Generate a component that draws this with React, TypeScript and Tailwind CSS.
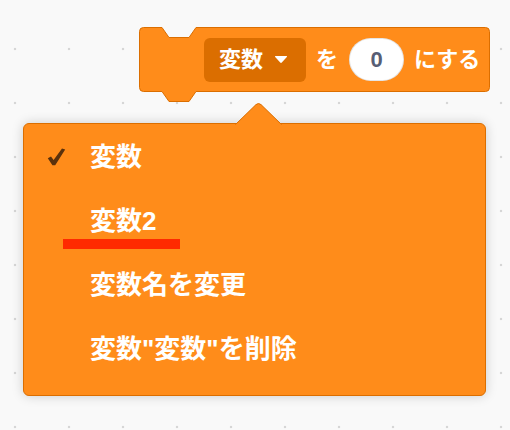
const items = ["変数", "変数2", "変数名を変更", "変数\"変数\"を削除"];

const BlockShape = () => (
    <svg className="absolute left-0 top-0 overflow-visible" width="352" height="76">
        <path
            d="M0.5,4.5 Q0.5,0.5 4.5,0.5 L23,0.5 L30,10.5 L50,10.5 L57,0.5 L346.5,0.5 Q350.5,0.5 350.5,4.5 L350.5,60.5 Q350.5,64.5 346.5,64.5 L57,64.5 L50,74.5 L30,74.5 L23,64.5 L4.5,64.5 Q0.5,64.5 0.5,60.5 Z"
            fill="#ff8c1a"
            stroke="#db6e00"
        />
    </svg>
);

const CheckMark = () => (
    <svg width="19" height="18" viewBox="0 0 19 18">
        <path d="M0.8,10.2 L4,8.4 L6.6,12 L15,0.6 L18.2,1.6 L8.2,17.2 L5.4,17.2 Z" fill="#5a310c" />
    </svg>
);

export default function App() {
    return (
        <div className="w-[510px] h-[430px] overflow-hidden bg-[#f9f9f9] bg-[radial-gradient(circle,#d6d6d6_1.4px,transparent_1.6px)] bg-[size:54px_54px] bg-[position:-12px_22px] font-['Liberation_Sans','Noto_Sans_CJK_JP',sans-serif] pt-[27px]">
            <div className="relative ml-[139px] w-[351px] h-[65px]">
                <BlockShape />
                <div className="relative flex items-center h-full pl-[65px] text-white font-bold text-[22px]">
                    <div className="flex items-center h-[44px] w-[102px] pl-[15px] rounded-md bg-[#db6e00]">
                        <span>変数</span>
                        <svg className="ml-[11px]" width="14" height="9" viewBox="0 0 14 9">
                            <path d="M1.5,1 L12.5,1 Q13.5,1 12.8,2 L7.8,7.6 Q7,8.4 6.2,7.6 L1.2,2 Q0.5,1 1.5,1 Z" fill="#fff" />
                        </svg>
                    </div>
                    <span className="ml-[10px]">を</span>
                    <div className="ml-[11px] flex items-center justify-center w-[55px] h-[43px] rounded-full bg-white border border-black/10 text-[#575e75] text-[22px]">
                        0
                    </div>
                    <span className="ml-[10px]">にする</span>
                </div>
            </div>

            <div className="relative mt-[31px] ml-[23px] w-[463px] h-[273px] rounded-[6px] bg-[#ff8c1a] border border-[#db6e00] shadow-[0_0_12px_rgba(0,0,0,0.18)] pt-[1px]">
                <svg className="absolute left-[211px] top-[-21px]" width="47" height="22" viewBox="0 0 47 22">
                    <path d="M0.5,21.5 L21,1.6 Q23.5,-0.6 26,1.6 L46.5,21.5" fill="#ff8c1a" stroke="#db6e00" />
                    <rect x="1.5" y="21" width="44" height="2" fill="#ff8c1a" />
                </svg>
                {items.map((label, index) => (
                    <div key={index} className="flex items-center h-[64px]">
                        <div className="w-[66px] pl-[23px] flex items-center">
                            {index === 0 && <CheckMark />}
                        </div>
                        <span className="text-white font-bold text-[26px] leading-none">{label}</span>
                    </div>
                ))}
                <div className="absolute left-[39px] top-[115px] w-[117px] h-[10px] bg-[#ff2a00]" />
            </div>
        </div>
    );
}
